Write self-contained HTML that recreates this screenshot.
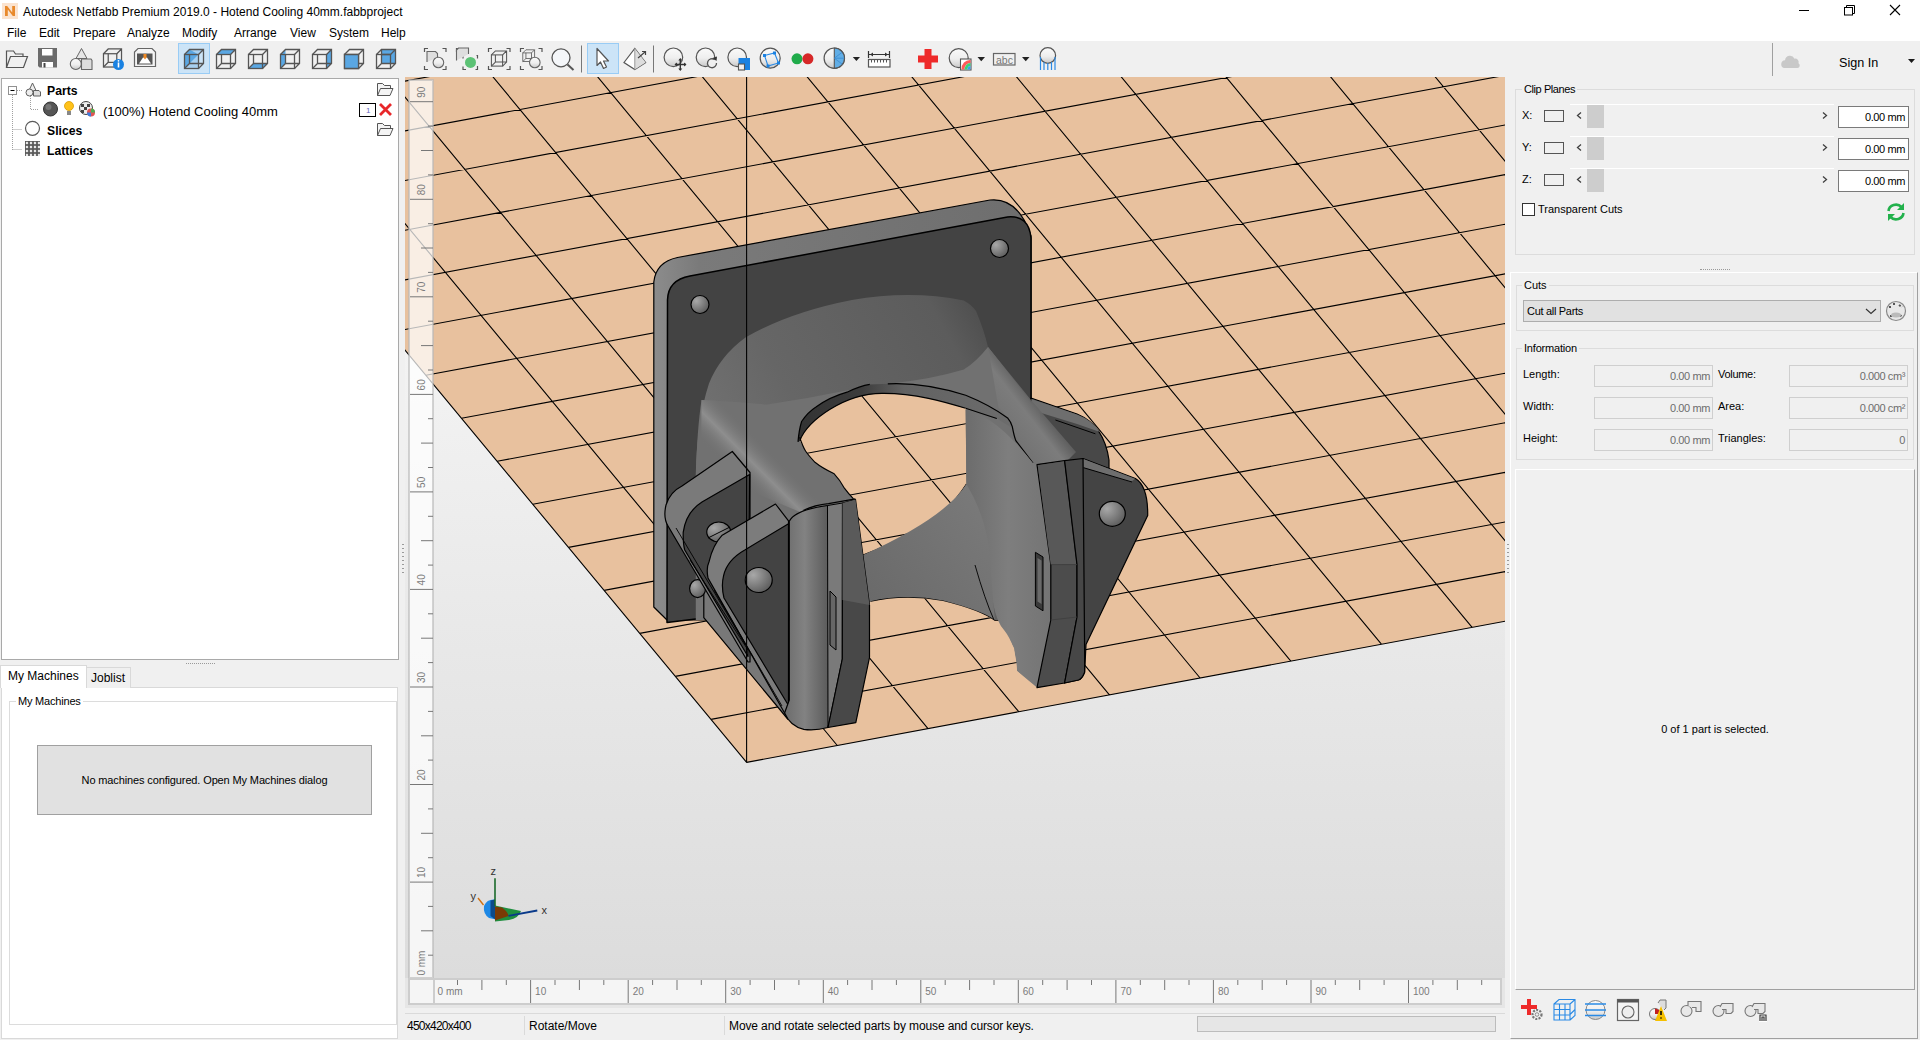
<!DOCTYPE html>
<html><head><meta charset="utf-8">
<style>
*{margin:0;padding:0;box-sizing:border-box}
html,body{width:1920px;height:1040px;overflow:hidden;background:#f0f0f0;font-family:"Liberation Sans",sans-serif;color:#000}
.a{position:absolute}
.t{position:absolute;white-space:nowrap;line-height:1}
#title{left:0;top:0;width:1920px;height:22px;background:#fff}
#menu{left:0;top:22px;width:1920px;height:19px;background:#fff}
#tb{left:0;top:41px;width:1920px;height:36px;background:#f0f0f0}
.gb{position:absolute;border:1px solid #dcdcdc}
.gl{position:absolute;background:#f0f0f0;padding:0 2px;font-size:11px;line-height:1;white-space:nowrap}
.fld{position:absolute;background:#fff;border:1px solid #7a7a7a;font-size:11px;letter-spacing:-0.4px;text-align:right;padding-right:3px;line-height:20px}
.ifld{position:absolute;background:#f0f0f0;border:1px solid #cfcfcf;font-size:11px;letter-spacing:-0.4px;color:#6d6d6d;text-align:right;padding-right:2px;line-height:20px}
.lbl{position:absolute;font-size:11px;white-space:nowrap;line-height:1}
</style></head><body>
<svg class="a" style="left:405px;top:77px" width="1100" height="931" viewBox="405 77 1100 931">
<defs>
<linearGradient id="bg" x1="0" y1="0" x2="0" y2="1"><stop offset="0" stop-color="#fdfdfd"/><stop offset="1" stop-color="#dcdcdc"/></linearGradient>
<clipPath id="cv"><rect x="405" y="77" width="1100" height="901"/></clipPath>
</defs>
<rect x="405" y="77" width="1100" height="931" fill="#e6e6e6"/>
<g clip-path="url(#cv)">
<rect x="405" y="77" width="1100" height="901" fill="url(#bg)"/>
<g id="bedgrid"><polygon fill="#e8c19e" points="746.6,762.4 4823.0,3.8 3334.4,-1804.5 -752.4,-1046.9"/>
<path d="M746.6 762.4L-752.4 -1046.9M837.3 745.5L-661.4 -1063.8M928.0 728.6L-570.5 -1080.6M1018.7 711.7L-479.6 -1097.5M1109.4 694.9L-388.7 -1114.4M1200.1 678.0L-297.7 -1131.2M1290.8 661.1L-206.8 -1148.1M1381.4 644.2L-115.9 -1164.9M1472.1 627.4L-25.0 -1181.8M1562.8 610.5L65.9 -1198.6M1653.4 593.6L156.8 -1215.5M1744.1 576.7L247.7 -1232.3M1834.7 559.9L338.6 -1249.2M1925.4 543.0L429.4 -1266.0M2016.0 526.1L520.3 -1282.8M2106.7 509.3L611.2 -1299.7M2197.3 492.4L702.0 -1316.5M2287.9 475.6L792.9 -1333.4M2378.5 458.7L883.7 -1350.2M2469.1 441.8L974.6 -1367.0M2559.7 425.0L1065.4 -1383.9M2650.3 408.1L1156.2 -1400.7M2740.9 391.3L1247.1 -1417.6M2831.5 374.4L1337.9 -1434.4M2922.1 357.5L1428.7 -1451.2M3012.7 340.7L1519.5 -1468.1M3103.2 323.8L1610.3 -1484.9M3193.8 307.0L1701.1 -1501.7M3284.4 290.1L1791.9 -1518.5M3374.9 273.3L1882.7 -1535.4M3465.5 256.4L1973.4 -1552.2M3556.0 239.6L2064.2 -1569.0M3646.5 222.7L2155.0 -1585.9M3737.1 205.9L2245.7 -1602.7M3827.6 189.0L2336.5 -1619.5M3918.1 172.2L2427.2 -1636.3M4008.6 155.4L2518.0 -1653.1M4099.1 138.5L2608.7 -1670.0M4189.6 121.7L2699.5 -1686.8M4280.1 104.8L2790.2 -1703.6M4370.6 88.0L2880.9 -1720.4M4461.1 71.2L2971.6 -1737.2M4551.6 54.3L3062.3 -1754.0M4642.1 37.5L3153.0 -1770.9M4732.5 20.7L3243.7 -1787.7M4823.0 3.8L3334.4 -1804.5M746.6 762.4L4823.0 3.8M711.0 719.4L4787.6 -39.1M675.3 676.4L4752.3 -82.1M639.7 633.4L4716.9 -125.1M604.1 590.4L4681.5 -168.1M568.5 547.4L4646.1 -211.1M532.8 504.3L4610.7 -254.1M497.2 461.3L4575.3 -297.1M461.5 418.3L4539.9 -340.1M425.9 375.3L4504.5 -383.1M390.2 332.3L4469.1 -426.1M354.6 289.2L4433.7 -469.1M318.9 246.2L4398.3 -512.1M283.3 203.1L4362.9 -555.1M247.6 160.1L4327.5 -598.1M211.9 117.0L4292.1 -641.2M176.3 74.0L4256.6 -684.2M140.6 30.9L4221.2 -727.2M104.9 -12.1L4185.8 -770.3M69.2 -55.2L4150.4 -813.3M33.5 -98.3L4114.9 -856.4M-2.1 -141.4L4079.5 -899.4M-37.8 -184.4L4044.0 -942.5M-73.5 -227.5L4008.6 -985.5M-109.2 -270.6L3973.1 -1028.6M-144.9 -313.7L3937.7 -1071.7M-180.6 -356.8L3902.2 -1114.7M-216.3 -399.9L3866.8 -1157.8M-252.1 -443.0L3831.3 -1200.9M-287.8 -486.1L3795.8 -1244.0M-323.5 -529.2L3760.4 -1287.1M-359.2 -572.4L3724.9 -1330.2M-394.9 -615.5L3689.4 -1373.3M-430.7 -658.6L3653.9 -1416.4M-466.4 -701.7L3618.4 -1459.5M-502.1 -744.9L3583.0 -1502.6M-537.9 -788.0L3547.5 -1545.7M-573.6 -831.2L3512.0 -1588.8M-609.4 -874.3L3476.5 -1631.9M-645.1 -917.5L3441.0 -1675.1M-680.9 -960.6L3405.5 -1718.2M-716.6 -1003.8L3370.0 -1761.3M-752.4 -1046.9L3334.4 -1804.5" stroke="#000" stroke-width="1.1" fill="none"/></g>
<defs>
<linearGradient id="gPlTop" x1="0" y1="0" x2="1" y2="0"><stop offset="0" stop-color="#8c8c8c"/><stop offset="0.12" stop-color="#7a7a7a"/><stop offset="1" stop-color="#6e6e6e"/></linearGradient>
<linearGradient id="gDuct" gradientUnits="userSpaceOnUse" x1="700" y1="470" x2="990" y2="310"><stop offset="0" stop-color="#747474"/><stop offset="0.35" stop-color="#666"/><stop offset="0.85" stop-color="#5c5c5c"/><stop offset="1" stop-color="#4c4c4c"/></linearGradient>
<linearGradient id="gBand" gradientUnits="userSpaceOnUse" x1="715" y1="455" x2="745" y2="425"><stop offset="0" stop-color="#717171" stop-opacity="0"/><stop offset="0.5" stop-color="#8e8e8e"/><stop offset="1" stop-color="#717171" stop-opacity="0"/></linearGradient>
<linearGradient id="gTubeR" gradientUnits="userSpaceOnUse" x1="1000" y1="430" x2="1045" y2="395"><stop offset="0" stop-color="#717171"/><stop offset="0.55" stop-color="#7c7c7c"/><stop offset="0.8" stop-color="#626262" stop-opacity="0.9"/><stop offset="1" stop-color="#4a4a4a" stop-opacity="0"/></linearGradient>
<linearGradient id="gBlk" x1="0" y1="0" x2="1" y2="0"><stop offset="0" stop-color="#6c6c6c"/><stop offset="0.35" stop-color="#828282"/><stop offset="0.75" stop-color="#5c5c5c"/><stop offset="1" stop-color="#484848"/></linearGradient>
<linearGradient id="gWallR" x1="0" y1="0" x2="1" y2="0"><stop offset="0" stop-color="#6c6c6c"/><stop offset="0.45" stop-color="#7e7e7e"/><stop offset="1" stop-color="#727272"/></linearGradient>
<linearGradient id="gLow" gradientUnits="userSpaceOnUse" x1="870" y1="600" x2="990" y2="500"><stop offset="0" stop-color="#6a6a6a"/><stop offset="1" stop-color="#7a7a7a"/></linearGradient>
<linearGradient id="gIW" gradientUnits="userSpaceOnUse" x1="798" y1="0" x2="1010" y2="0"><stop offset="0" stop-color="#333"/><stop offset="0.3" stop-color="#3c3c3c"/><stop offset="0.5" stop-color="#626262"/><stop offset="1" stop-color="#6c6c6c"/></linearGradient>
<radialGradient id="gHole" cx="0.3" cy="0.3" r="0.8"><stop offset="0" stop-color="#a8a8a8"/><stop offset="1" stop-color="#5a5a5a"/></radialGradient>
<clipPath id="cOp1"><path d="M799.8 440.7C808 420 845 393.5 881.8 393.4C915 393 945 402 965.7 408.3L966.4 484Q945 518 905.3 536Q885 547 863 555L853.5 498.8Q846 490 843.8 487.3Q838 478 834.2 473.8Q822 468 815 462.3Q808 455 805.4 450.8Z"/></clipPath>
<clipPath id="cOp2"><path d="M869.5 602Q905 594 943 601Q980 610 995 621Q1006 632 1014 648L1017 671L1037 689L869.5 689Z"/></clipPath>
</defs>
<g stroke="#000" stroke-width="1.2" stroke-linejoin="round">
<!-- plate silhouette (top + left bands) -->
<path fill="url(#gPlTop)" d="M653.8 282Q656 262 677.5 257.5L990 200Q1018 197 1031 236V620H667L653.8 607Z"/>
<!-- plate front face -->
<path fill="#434343" d="M667.5 300Q668 280 690 276L1007.5 217Q1029 215 1031 238V620L704 618L667 622.5Z" stroke-width="1.5"/>
<ellipse cx="700" cy="304.5" rx="9" ry="9" fill="url(#gHole)"/>
<ellipse cx="999.5" cy="248.5" rx="9" ry="9" fill="url(#gHole)"/>
<!-- duct inner surface seen through fan opening -->
<path fill="url(#gDuct)" stroke="none" d="M695.8 620V473.8Q697 420 709 383.5Q720 356 745.8 337.3Q790 312 852 300Q910 290 963.8 300.4Q972 305 976 311Q984 330 988 347L1040 414V620Z"/>
<!-- right back ear -->
<path fill="#484848" d="M1031 398L1077 414Q1104 425 1109 460V472H1031Z"/>
<path fill="#6e6e6e" stroke="none" d="M1031.5 399L1077 414.5Q1092 420 1100 432L1077 424L1031.5 410Z"/>
<path fill="none" d="M1055.4 420L1095.4 433.8" stroke-width="1"/>
<!-- bridge band (ring top surface + tubes) -->
<path fill="#717171" stroke="none" d="M701.5 400Q728 401 767 404.6Q805 399 843.8 391Q870 386 890 383.5Q929 380 963.8 369.6Q976 362 988 347L1040 414V600H869.5L855 520L790 530L696 520L696 474Q697 430 701.5 400Z"/>
<path fill="url(#gBand)" stroke="none" d="M701.5 400L745 401L830 498L800 512L701 470Z"/>
<path fill="url(#gTubeR)" stroke="none" d="M988 347L1031 400L1076 452L1062 466L1033 463Q1016 441 1012 427Q1005 412 998.5 407.7Z"/>
<!-- inner wall band of opening -->
<path fill="url(#gIW)" stroke="none" d="M798 441.9Q799 430 801.6 421.5Q808 412 816 407Q830 397 847 392.2Q860 386 869.8 384.4L887.8 383.8Q923.7 382 965.7 395.2Q990 405 1007.6 417.9L1012 428L996.8 418.5L965.7 408.3C945 402 915 393 881.8 393.4C845 393.5 808 420 799.8 440.7Z"/>
<path fill="none" d="M798 441.9Q799 430 801.6 421.5Q808 412 816 407Q830 397 847 392.2Q860 386 869.8 384.4M887.8 383.8Q923.7 382 965.7 395.2Q990 405 1007.6 417.9Q1011 422 1012.3 426.7Q1014 436 1015.8 440.6L1033 463M965.7 408.3L996.8 418.5"/>
<!-- top opening -->
<g clip-path="url(#cOp1)"><use href="#bedgrid"/></g>
<path fill="none" stroke-width="1.1" d="M799.8 440.7C808 420 845 393.5 881.8 393.4C915 393 945 402 965.7 408.3M966.4 484Q945 518 905.3 536Q885 547 863 555M799.6 437.3Q803 447 805.4 450.8Q808 455 815 462.3Q822 468 834.2 473.8Q840 480 843.8 487.3Q848 493 853.5 498.8"/>
<!-- right wall face -->
<path fill="url(#gWallR)" stroke="none" d="M965.6 409.4Q996 416 1033 463L1060 470V683L1037 687.5L1017 671Q1016 645 1004 630Q990 615 990 560Q975 520 966.4 484Z"/>
<!-- lower inner duct surface -->
<path fill="url(#gLow)" stroke="none" d="M863 555Q945 518 966.4 484Q988 520 990 560Q993 600 995 621Q980 610 943 601Q905 594 869.5 602Z"/>
<path fill="none" d="M870.7 601.8Q905 594 943 601Q985 612 995 621"/>
<path fill="none" stroke-width="0.9" d="M975 565Q985 600 994 620"/>
<!-- lower opening -->
<g clip-path="url(#cOp2)"><use href="#bedgrid"/></g>
<!-- right ear front flange -->
<path fill="#444" d="M1083 458.5L1135.4 478.5Q1148 486 1147.7 515.4L1086 644.6L1084.6 672.3Q1082 679 1078.5 680L1064.6 683L1070 470Z"/>
<path fill="#6e6e6e" stroke="none" d="M1083.5 459L1135 478.8L1131 482L1083.5 467.5Z"/>
<path fill="none" d="M1083.5 467.7L1132 482" stroke-width="1"/>
<ellipse cx="1112.3" cy="513.8" rx="13" ry="12.5" fill="url(#gHole)"/>
<!-- right block front strips -->
<path fill="#4c4c4c" d="M1037 464.6L1064.6 460.6L1077 564.6V617L1064.6 683L1037 687.7L1050.8 620V564.6Z"/>
<path fill="#585858" stroke="none" d="M1037.7 465.2L1064 461.3L1076.4 564L1050.6 564.2Z"/>
<path fill="#474747" d="M1064.6 460.6L1083 458.5L1084.6 647.7V672.3Q1082 679 1078.5 680L1064.6 683L1077 617V564.6Z"/>
<path fill="none" d="M1050.8 564.6L1077 564.6M1050.8 620L1077 617" stroke="#3e3e3e" stroke-width="0.8"/>
<!-- slot on right wall -->
<path d="M1035.4 552.3L1043 557V610.8L1035.4 606Z" fill="#3a3a3a" stroke-width="1"/><path d="M1037.5 558L1041.5 560.5V604L1037.5 601.5Z" fill="#6a6a6a" stroke="none"/>
<!-- left clamp back flange -->
<path fill="#787878" d="M703.8 585V617.7L787.7 719L789.4 700L730 580Z"/>
<ellipse cx="697.6" cy="588.6" rx="8" ry="9" fill="url(#gHole)"/>
<path fill="#7a7a7a" d="M732.3 451.5L750 472.5V662H748L668 526Q663 518 666 505Q670 492 682 486Z"/>
<path fill="#444" d="M749.6 474.6L702 502Q686 512 683.2 532.4Q683 543 684.6 549.7L748 656.5Z"/>
<path fill="none" stroke-width="0.9" d="M676 528L745 644M690 560L748 650"/>
<ellipse cx="718.75" cy="532" rx="12" ry="10" fill="url(#gHole)"/>
<path fill="none" d="M708 538L730 527" stroke-width="1"/>
<!-- left clamp front flange -->
<path fill="#7c7c7c" d="M775.5 504L788.5 520.8L789.4 713L784.6 713L708 578Q706 568 709.2 561.2Q713 545 722.2 535.2Z"/>
<path fill="#434343" d="M788.5 523.7L745.2 549.7Q727 560 723.6 575.6Q721 586 724 598L788.5 705.5Z"/>
<path fill="none" d="M714 590L782 706" stroke-width="0.9"/>
<ellipse cx="758.75" cy="580" rx="13.5" ry="12.5" fill="url(#gHole)"/>
<!-- left block -->
<path fill="url(#gBlk)" d="M789.25 521.25Q795 510 827.5 505.5L830 505.5L842 659L828 727.5Q815 731 803.8 729.4Q790 726 784.6 713L789.25 700Z"/>
<path fill="#7a7a7a" stroke-width="1" d="M827.5 505.5L842.5 503L842.3 659L828 727.5Z"/>
<path fill="#484848" d="M842.5 503L855.5 499.5L869.5 605V657.5L855.8 722.7L828 727.5L842.3 659Z"/>
<path fill="#5a5a5a" stroke="none" d="M842.5 503L855.5 499.5L869.5 605L842.5 600Z"/>
<path fill="#666" stroke-width="1" d="M830 591L836 597V650L830 645Z"/>
<!-- duct top connecting to left block -->

<path fill="none" d="M803.5 510.4Q815 505 828.5 503.7L855.4 498.8"/>
</g>

<path d="M746.6 77V762.4" stroke="#000" stroke-width="1.1"/>
</g>
<rect x="409" y="80" width="24" height="898" fill="#fff" fill-opacity="0.72" stroke="#b8b8b8" stroke-opacity="0.6" stroke-width="2"/>
<path d="M410 979.6H433M428 955.2H433M421 930.8H433M428 906.4H433M410 882.1H433M428 857.7H433M421 833.3H433M428 808.9H433M410 784.5H433M428 760.1H433M421 735.8H433M428 711.4H433M410 687.0H433M428 662.6H433M421 638.2H433M428 613.8H433M410 589.4H433M428 565.1H433M421 540.7H433M428 516.3H433M410 491.9H433M428 467.5H433M421 443.1H433M428 418.7H433M410 394.4H433M428 370.0H433M421 345.6H433M428 321.2H433M410 296.8H433M428 272.4H433M421 248.0H433M428 223.7H433M410 199.3H433M428 174.9H433M421 150.5H433M428 126.1H433M410 101.7H433" stroke="#777" stroke-width="1"/>
<text transform="translate(424.5 975.6) rotate(-90)" font-size="10" fill="#7b7b7b">0 mm</text>
<text transform="translate(424.5 878.1) rotate(-90)" font-size="10" fill="#7b7b7b">10</text>
<text transform="translate(424.5 780.5) rotate(-90)" font-size="10" fill="#7b7b7b">20</text>
<text transform="translate(424.5 683.0) rotate(-90)" font-size="10" fill="#7b7b7b">30</text>
<text transform="translate(424.5 585.4) rotate(-90)" font-size="10" fill="#7b7b7b">40</text>
<text transform="translate(424.5 487.9) rotate(-90)" font-size="10" fill="#7b7b7b">50</text>
<text transform="translate(424.5 390.4) rotate(-90)" font-size="10" fill="#7b7b7b">60</text>
<text transform="translate(424.5 292.8) rotate(-90)" font-size="10" fill="#7b7b7b">70</text>
<text transform="translate(424.5 195.3) rotate(-90)" font-size="10" fill="#7b7b7b">80</text>
<text transform="translate(424.5 97.7) rotate(-90)" font-size="10" fill="#7b7b7b">90</text>
<rect x="409" y="979" width="1092" height="25" fill="#f5f5f5" stroke="#cdcdcd" stroke-width="2"/>
<path d="M434 979V1004" stroke="#cdcdcd" stroke-width="2"/>
<path d="M457.5 980v5M481.9 980v10M506.3 980v5M530.6 980V1003M555.0 980v5M579.4 980v10M603.8 980v5M628.2 980V1003M652.6 980v5M677.0 980v10M701.3 980v5M725.7 980V1003M750.1 980v5M774.5 980v10M798.9 980v5M823.3 980V1003M847.6 980v5M872.0 980v10M896.4 980v5M920.8 980V1003M945.2 980v5M969.6 980v10M994.0 980v5M1018.3 980V1003M1042.7 980v5M1067.1 980v10M1091.5 980v5M1115.9 980V1003M1140.3 980v5M1164.7 980v10M1189.0 980v5M1213.4 980V1003M1237.8 980v5M1262.2 980v10M1286.6 980v5M1311.0 980V1003M1335.3 980v5M1359.7 980v10M1384.1 980v5M1408.5 980V1003M1432.9 980v5M1457.3 980v10M1481.7 980v5" stroke="#777" stroke-width="1"/>
<text x="437.6" y="995" font-size="10" fill="#7b7b7b">0 mm</text>
<text x="535.1" y="995" font-size="10" fill="#7b7b7b">10</text>
<text x="632.7" y="995" font-size="10" fill="#7b7b7b">20</text>
<text x="730.2" y="995" font-size="10" fill="#7b7b7b">30</text>
<text x="827.8" y="995" font-size="10" fill="#7b7b7b">40</text>
<text x="925.3" y="995" font-size="10" fill="#7b7b7b">50</text>
<text x="1022.8" y="995" font-size="10" fill="#7b7b7b">60</text>
<text x="1120.4" y="995" font-size="10" fill="#7b7b7b">70</text>
<text x="1217.9" y="995" font-size="10" fill="#7b7b7b">80</text>
<text x="1315.5" y="995" font-size="10" fill="#7b7b7b">90</text>
<text x="1413.0" y="995" font-size="10" fill="#7b7b7b">100</text>
<g>
<path d="M495 905.5L521 911Q519 918 509 920L495 921.5Z" fill="#1f8f3f"/>
<path d="M495 906.5L502 907.5Q508 912 508.5 916L495 920.4Z" fill="#7a3a05"/>
<path d="M495 899.6Q487 899 484 906Q483 914 489 918L495 919.2Z" fill="#1e88e5"/>
<path d="M490.5 900.5L495 899.6V919.2L490.5 916Z" fill="#0d4a8a"/>
<path d="M495 878.2V906" stroke="#1a6a2a" stroke-width="1.6"/>
<path d="M478 898l5.5 7" stroke="#d07010" stroke-width="1.4"/>
<path d="M508.5 915.8L537.3 910.5" stroke="#0a3a8a" stroke-width="1.8"/>
<text x="490.5" y="875" font-size="11" fill="#333" font-family="Liberation Sans">z</text>
<text x="470.5" y="900" font-size="11" fill="#333" font-family="Liberation Sans">y</text>
<text x="541.5" y="913.5" font-size="11" fill="#333" font-family="Liberation Sans">x</text>
</g>

</svg><div id="title" class="a">
 <svg class="a" style="left:2px;top:3px" width="16" height="16" viewBox="0 0 16 16"><rect width="16" height="16" fill="#fbe3cf"/><path d="M3 13V3h2.2l5 6.5V3H13v10h-2.2l-5-6.5V13z" fill="#e8892b"/></svg>
 <div class="t" id="ttl" style="left:23px;top:6px;font-size:12px">Autodesk Netfabb Premium 2019.0 - Hotend Cooling 40mm.fabbproject</div>
 <svg class="a" style="left:1790px;top:0" width="130" height="22"><path d="M9 10.5h10" stroke="#000" stroke-width="1"/><rect x="54.5" y="7.5" width="8" height="7.5" fill="none" stroke="#000"/><path d="M56.5 7.5V5.5h8v8h-2" fill="none" stroke="#000"/><path d="M100 5l10 10M110 5l-10 10" stroke="#000" stroke-width="1.1"/></svg>
</div>
<div id="menu" class="a">
 <div class="t" style="left:7px;top:5px;font-size:12px">File</div>
 <div class="t" style="left:39px;top:5px;font-size:12px">Edit</div>
 <div class="t" style="left:73px;top:5px;font-size:12px">Prepare</div>
 <div class="t" style="left:127px;top:5px;font-size:12px">Analyze</div>
 <div class="t" style="left:182px;top:5px;font-size:12px">Modify</div>
 <div class="t" style="left:234px;top:5px;font-size:12px">Arrange</div>
 <div class="t" style="left:290px;top:5px;font-size:12px">View</div>
 <div class="t" style="left:329px;top:5px;font-size:12px">System</div>
 <div class="t" style="left:381px;top:5px;font-size:12px">Help</div>
</div>
<div id="tb" class="a"></div>
<!-- left tree panel -->
<div class="a" style="left:1px;top:78px;width:398px;height:582px;background:#fff;border:1px solid #a9a9a9"></div>
<div class="a" style="left:186px;top:663px;width:29px;height:1px;border-top:1px dotted #9a9a9a"></div>
<!-- tabs -->
<div class="a" style="left:1px;top:687px;width:397px;height:352px;background:#fff;border:1px solid #d9d9d9"></div>
<div class="a" style="left:86px;top:667px;width:45px;height:21px;background:#f0f0f0;border:1px solid #d9d9d9;border-bottom:none"></div>
<div class="a" style="left:0px;top:665px;width:87px;height:23px;background:#fff;border:1px solid #d9d9d9;border-bottom:none"></div>
<div class="t" style="left:8px;top:670px;font-size:12px">My Machines</div>
<div class="t" style="left:91px;top:672px;font-size:12px">Joblist</div>
<div class="a" style="left:9px;top:701px;width:388px;height:324px;border:1px solid #dcdcdc"></div>
<div class="t" style="left:16px;top:696px;font-size:11px;background:#fff;padding:0 2px;letter-spacing:-0.2px">My Machines</div>
<div class="a" style="left:37px;top:745px;width:335px;height:70px;background:#e1e1e1;border:1px solid #a0a0a0"></div>
<div class="t" style="left:37px;top:775px;width:335px;text-align:center;font-size:11px;letter-spacing:-0.13px">No machines configured. Open My Machines dialog</div>
<!-- status bar -->
<div class="a" style="left:405px;top:1013px;width:1100px;height:1px;background:#dadada"></div>
<div class="t" style="left:407px;top:1020px;font-size:12px;letter-spacing:-0.76px">450x420x400</div>
<div class="a" style="left:524px;top:1016px;width:1px;height:19px;background:#dadada"></div>
<div class="t" style="left:529px;top:1020px;font-size:12px">Rotate/Move</div>
<div class="a" style="left:724px;top:1016px;width:1px;height:19px;background:#dadada"></div>
<div class="t" style="left:729px;top:1020px;font-size:12px;letter-spacing:-0.12px">Move and rotate selected parts by mouse and cursor keys.</div>
<div class="a" style="left:1197px;top:1016px;width:299px;height:16px;background:#e6e6e6;border:1px solid #bcbcbc"></div>
<!-- right panel -->
<div class="a" style="left:1772px;top:43px;width:1px;height:33px;background:#a0a0a0"></div>
<div class="t" style="left:1839px;top:57px;font-size:12.6px">Sign In</div>
<svg class="a" style="left:1780px;top:52px" width="140" height="20"><path d="M4 16a4 4 0 0 1 1-7.8a5 5 0 0 1 9.5-1.5a3.5 3.5 0 0 1 4 4.5a2.6 2.6 0 0 1-1 4.8z" fill="#c8c8c8"/><path d="M128 7h7l-3.5 4z" fill="#1a1a1a"/></svg>
<div class="gb" style="left:1515px;top:89px;width:400px;height:166px"></div>
<div class="gl" style="left:1522px;top:84px;letter-spacing:-0.42px">Clip Planes</div>
<div class="gb" style="left:1510px;top:272px;width:408px;height:767px;border-color:#fff #a0a0a0 #a0a0a0 #fff"></div>
<div class="gb" style="left:1516px;top:285px;width:398px;height:46px"></div>
<div class="gl" style="left:1522px;top:280px">Cuts</div>
<div class="gb" style="left:1516px;top:348px;width:398px;height:112px"></div>
<div class="gl" style="left:1522px;top:343px;letter-spacing:-0.2px">Information</div>
<div class="gb" style="left:1515px;top:469px;width:400px;height:521px;border-color:#fff #a0a0a0 #a0a0a0 #fff"></div>
<div class="t" style="left:1515px;top:724px;width:400px;text-align:center;font-size:11px">0 of 1 part is selected.</div>
<div class="a" style="left:402px;top:544px;width:2px;height:29px;background:repeating-linear-gradient(to bottom,#9a9a9a 0 1.5px,transparent 1.5px 4px)"></div>
<div class="a" style="left:1507px;top:544px;width:2px;height:29px;background:repeating-linear-gradient(to bottom,#9a9a9a 0 1.5px,transparent 1.5px 4px)"></div>
<!-- clip rows -->
<div class="lbl" style="left:1522px;top:110px">X:</div>
<div class="lbl" style="left:1522px;top:142px">Y:</div>
<div class="lbl" style="left:1522px;top:174px">Z:</div>
<svg class="a" style="left:1540px;top:100px" width="375" height="95">
 <g id="cr">
 <rect x="4.5" y="10.5" width="19" height="11" fill="none" stroke="#555"/>
 <path d="M41 12.5l-3.5 3l3.5 3" fill="none" stroke="#404040" stroke-width="1.3"/>
 <rect x="47" y="5" width="17" height="23" fill="#cdcdcd"/>
 <path d="M30 4.5h264" stroke="#fff"/>
 <path d="M283 12.5l3.5 3l-3.5 3" fill="none" stroke="#404040" stroke-width="1.3"/>
 </g>
 <use href="#cr" y="32"/><use href="#cr" y="64"/>
</svg>
<div class="fld" style="left:1838px;top:106px;width:71px;height:22px">0.00 mm</div>
<div class="fld" style="left:1838px;top:138px;width:71px;height:22px">0.00 mm</div>
<div class="fld" style="left:1838px;top:170px;width:71px;height:22px">0.00 mm</div>
<div class="a" style="left:1522px;top:203px;width:13px;height:13px;background:#fff;border:1px solid #333"></div>
<div class="lbl" style="left:1538px;top:204px">Transparent Cuts</div>
<svg class="a" style="left:1885px;top:202px" width="22" height="20" viewBox="0 0 22 20"><path d="M3.5 9a7.5 7 0 0 1 13-4" fill="none" stroke="#22b14c" stroke-width="2.6"/><path d="M19 1v7h-7z" fill="#22b14c"/><path d="M18.5 11a7.5 7 0 0 1-13 4" fill="none" stroke="#22b14c" stroke-width="2.6"/><path d="M3 19v-7h7z" fill="#22b14c"/></svg>
<div class="a" style="left:1700px;top:269px;width:30px;height:1px;border-top:1px dotted #9a9a9a"></div>
<!-- cuts -->
<div class="a" style="left:1523px;top:300px;width:358px;height:22px;background:#e1e1e1;border:1px solid #adadad"></div>
<div class="lbl" style="left:1527px;top:306px;letter-spacing:-0.3px">Cut all Parts</div>
<svg class="a" style="left:1864px;top:306px" width="14" height="10"><path d="M2 3l5 4.5l5-4.5" fill="none" stroke="#333" stroke-width="1.1"/></svg>
<svg class="a" style="left:1885px;top:300px" width="22" height="22" viewBox="0 0 22 22"><circle cx="11" cy="11" r="9.5" fill="#e8e8e8" stroke="#8a8a8a" stroke-width="1.2"/><path d="M4 7h3M8 4h3M14 5l3 2M5 16h3M15 15l2 2" stroke="#555" stroke-width="2" stroke-dasharray="2 1.5"/><ellipse cx="11" cy="15" rx="5" ry="2.5" fill="#bbb"/></svg>
<!-- info -->
<div class="lbl" style="left:1523px;top:369px">Length:</div>
<div class="lbl" style="left:1523px;top:401px">Width:</div>
<div class="lbl" style="left:1523px;top:433px">Height:</div>
<div class="lbl" style="left:1718px;top:369px;letter-spacing:-0.3px">Volume:</div>
<div class="lbl" style="left:1718px;top:401px">Area:</div>
<div class="lbl" style="left:1718px;top:433px">Triangles:</div>
<div class="ifld" style="left:1594px;top:365px;width:119px;height:22px">0.00 mm</div>
<div class="ifld" style="left:1594px;top:397px;width:119px;height:22px">0.00 mm</div>
<div class="ifld" style="left:1594px;top:429px;width:119px;height:22px">0.00 mm</div>
<div class="ifld" style="left:1789px;top:365px;width:119px;height:22px">0.000 cm³</div>
<div class="ifld" style="left:1789px;top:397px;width:119px;height:22px">0.000 cm²</div>
<div class="ifld" style="left:1789px;top:429px;width:119px;height:22px">0</div>
<svg class="a" style="left:1515px;top:995px" width="260" height="30" viewBox="1515 995 260 30">
 <path d="M1527 999h4v6h6v4h-6v6h-4v-6h-6v-4h6z" fill="#ee2a2a"/>
 <circle cx="1537" cy="1014.5" r="4.5" fill="#f0f0f0" stroke="#777" stroke-width="2.2" stroke-dasharray="2 1.3"/><circle cx="1537" cy="1014.5" r="1.8" fill="#f0f0f0" stroke="#777" stroke-width="0.8"/>
 <g fill="none" stroke="#2a8ae5" stroke-width="1.1"><path d="M1554 1004h16v16h-16zM1554 1004l5-4.5h16v16l-5 4.5M1570 1004l5-4.5M1559.5 1004v16M1565 1004v16M1554 1009.5h16M1554 1015h16M1575 1009.5l-5 5"/></g>
 <circle cx="1595.5" cy="1010" r="9.5" fill="url(#sph)" stroke="#888" stroke-width="1"/>
 <path d="M1585 1004h21M1585 1010h21M1585 1015.5h21" stroke="#2a8ae5" stroke-width="1.3"/>
 <rect x="1617.5" y="999.5" width="21" height="21" fill="#f4f4f4" stroke="#666" stroke-width="1.2"/><rect x="1617.5" y="999.5" width="21" height="3" fill="#555"/><circle cx="1628" cy="1012" r="6" fill="#eee" stroke="#666" stroke-width="1.1"/>
 <circle cx="1655" cy="1014" r="5.5" fill="url(#sph)" stroke="#777"/><path d="M1655 1008.5a5.5 5.5 0 0 1 5.5 5.5h-5.5z" fill="#c02020"/><path d="M1658 1003l2-3h6v8l-2 2" fill="#ddd" stroke="#777"/>
 <path d="M1661 1006l6 15h-12z" fill="#f5c000"/><path d="M1661 1011v4" stroke="#000" stroke-width="1.5"/><circle cx="1661" cy="1018" r="0.8"/>
 <g fill="#e8e8e8" stroke="#777" stroke-width="1.1">
  <circle cx="1686.5" cy="1011" r="5.5"/><path d="M1688 1006v-4.5h13v10h-5v-4h-4"/>
  <circle cx="1718.5" cy="1011" r="5.5"/><path d="M1720 1007l2-3.5h11v8l-2 2h-5v-4h-4"/>
  <circle cx="1750.5" cy="1011" r="5.5"/><path d="M1752 1007l2-3.5h11v8l-2 2h-5v-4h-4"/>
 </g>
 <rect x="1759" y="1014" width="8" height="8" fill="#fff"/><path d="M1760 1021v-6h6v6M1762 1021v-4h2v4" fill="none" stroke="#333" stroke-width="1.2"/>
</svg>
<svg class="a" style="left:0;top:78px" width="400" height="90" viewBox="0 78 400 90">
 <!-- tree lines -->
 <path d="M12.5 95v55M17 90.5h6M30.5 96v13.5h8M12.5 129.5h9M12.5 149.5h9" stroke="#a0a0a0" stroke-dasharray="1 1" fill="none"/>
 <rect x="8.5" y="86.5" width="8" height="8" fill="#fff" stroke="#919191"/>
 <path d="M10.5 90.5h4" stroke="#000"/>
 <!-- parts icon -->
 <g fill="#eee" stroke="#606060" stroke-width="1">
  <path d="M29 90.5l3.5-7.5l3.5 7.5"/>
  <circle cx="29.5" cy="92.5" r="3.5"/>
  <path d="M33.5 90.5h5.5l1.5 1.5v4h-7z" fill="#ddd"/>
 </g>
 <circle cx="50.5" cy="109" r="7" fill="#555" stroke="#333"/>
 <circle cx="48.5" cy="107" r="3" fill="#777"/>
 <!-- bulb -->
 <circle cx="69" cy="106" r="4.5" fill="#ffc21a" stroke="#d89a00" stroke-width="0.8"/>
 <rect x="67" y="111" width="4" height="4" fill="#888"/>
 <!-- checker sphere -->
 <circle cx="86" cy="108" r="6.5" fill="#eee" stroke="#444"/>
 <path d="M81 104h3v3h-3zM87 104h3v3h-3zM84 107h3v3h-3zM81 110h3v3h-3z" fill="#444"/>
 <circle cx="91" cy="112.5" r="4" fill="#e05555"/>
 <path d="M91 108.5a4 4 0 0 1 4 4h-4z" fill="#4caf50"/><path d="M87 112.5a4 4 0 0 0 4 4v-4z" fill="#3a7ee0"/>
 <!-- id box and red X -->
 <rect x="359.5" y="103.5" width="16" height="13" fill="#fff" stroke="#000"/>
 <text x="366" y="113" font-size="8" fill="#6a6ac0">1</text>
 <path d="M380 104l11 11M391 104l-11 11" stroke="#e8272a" stroke-width="2.8"/>
 <!-- folders -->
 <g fill="#f4f4f4" stroke="#555">
  <path d="M377.5 95.5v-12h5l2 2h6v3M377.5 95.5l3-7h12.5l-3 7z"/>
  <path d="M377.5 135.5v-12h5l2 2h6v3M377.5 135.5l3-7h12.5l-3 7z"/>
 </g>
 <!-- slices circle -->
 <circle cx="32.5" cy="128.3" r="7" fill="#fff" stroke="#5a5a5a" stroke-width="1.2"/>
 <!-- lattice checker -->
 <defs><pattern id="chk" width="4" height="4" patternUnits="userSpaceOnUse" x="25" y="141"><rect width="4" height="4" fill="#5a5a5a"/><rect x="1" y="1" width="2" height="2" fill="#fff" transform="rotate(45 2 2)"/></pattern></defs>
 <rect x="25" y="141" width="15" height="15" fill="url(#chk)"/>
</svg>
<div class="t" style="left:47px;top:85px;font-size:12.2px;font-weight:bold">Parts</div>
<div class="t" style="left:103px;top:105px;font-size:13px">(100%) Hotend Cooling 40mm</div>
<div class="t" style="left:47px;top:125px;font-size:12.2px;font-weight:bold">Slices</div>
<div class="t" style="left:47px;top:145px;font-size:12.2px;font-weight:bold">Lattices</div>
<svg class="a" style="left:0;top:41px" width="1100" height="36" viewBox="0 41 1100 36">
<defs>
 <linearGradient id="sph" x1="0" y1="0" x2="0" y2="1"><stop offset="0" stop-color="#fafafa"/><stop offset="0.55" stop-color="#eee"/><stop offset="1" stop-color="#c9c9c9"/></linearGradient>
 <g id="cube" fill="none" stroke="#555" stroke-width="1.3">
  <rect x="0.5" y="5.5" width="14" height="14"/><path d="M0.5 5.5l5-5h14v14l-5 5M14.5 5.5l5-5M5.5 5.5v9h9M14.5 14.5h5M0.5 19.5l5-5" /></g>
</defs>
<!-- open -->
<path d="M6.5 67.5V51h7l2 3h7.5v2.5M6.5 67.5l4-11h17l-4 11z" fill="none" stroke="#555" stroke-width="1.2"/>
<!-- save -->
<path d="M38 48h19v19.5H39.5L38 66z" fill="#6b6b6b"/>
<rect x="42" y="49" width="10.5" height="6.5" fill="#fff"/><rect x="42" y="62" width="11" height="5.5" fill="#fff"/><rect x="43.5" y="63" width="2" height="4.5" fill="#444"/>
<!-- shapes -->
<path d="M81.5 48.5l-5.5 10h11z" fill="#e6e6e6" stroke="#666" stroke-width="1"/>
<circle cx="75.8" cy="64" r="5.5" fill="url(#sph)" stroke="#666" stroke-width="1.1"/>
<path d="M81.5 59h9.5l1 1.5V69.5h-10.5z" fill="#ddd" stroke="#666" stroke-width="1.1"/>
<!-- box info -->
<g transform="translate(103 48.5)"><use href="#cube" transform="scale(0.95)"/></g>
<circle cx="118.5" cy="64.5" r="5.5" fill="#1a82e2"/><path d="M118.5 62.5v5" stroke="#fff" stroke-width="1.6"/><circle cx="118.5" cy="60.8" r="0.9" fill="#fff"/>
<!-- printer -->
<path d="M134.5 66.5V52l3.5-3.5h14l3.5 3.5v14.5z" fill="#f4f4f4" stroke="#666" stroke-width="1.2"/>
<rect x="137" y="53.5" width="15.5" height="11" fill="#555"/><path d="M139 63.5l4-6h4l4 6z" fill="#fff"/><path d="M143.5 54h3v3.5l-1.5 2l-1.5-2z" fill="#f08a24"/>
<!-- selected iso -->
<rect x="178.5" y="43.5" width="31" height="30" fill="#cce4f7" stroke="#99ccf5"/>
<g transform="translate(184 49)">
 <path d="M0.5 5.5h14v14H0.5z" fill="#a8d0f0"/><path d="M0.5 5.5h14L0.5 19.5z" fill="#5aa7e3"/><path d="M0.5 5.5l5-5h14l-5 5z" fill="#5aa7e3"/><path d="M5.5 0.5h14l-5 5z" fill="#a8d0f0"/>
 <use href="#cube"/></g>
<!-- top -->
<g transform="translate(216 49)"><path d="M0.5 5.5l5-5h14l-5 5z" fill="#5aa7e3"/><use href="#cube"/></g>
<!-- bottom -->
<g transform="translate(248 49)"><path d="M0.5 19.5l5-5h14l-5 5z" fill="#5aa7e3"/><use href="#cube"/></g>
<!-- left -->
<g transform="translate(280 49)"><path d="M0.5 5.5l5-5v14l-5 5z" fill="#5aa7e3"/><use href="#cube"/></g>
<!-- right -->
<g transform="translate(312 49)"><path d="M14.5 5.5l5-5v14l-5 5z" fill="#5aa7e3"/><use href="#cube"/></g>
<!-- front -->
<g transform="translate(344 49)"><use href="#cube"/><path d="M0.5 5.5h14v14H0.5z" fill="#5aa7e3" stroke="#555" stroke-width="1.3"/></g>
<!-- back -->
<g transform="translate(376 49)"><path d="M5.5 0.5h14v14h-14z" fill="#5aa7e3"/><use href="#cube"/><path d="M5.5 0.5v5M5.5 5.5h9" stroke="#555" stroke-width="1.3" fill="none"/></g>
<!-- zoom all -->
<g fill="none" stroke="#555" stroke-width="1.2">
 <path d="M424.5 52v-3.5h3.5M442.5 48.5h3.5V52M446 66v3.5h-3.5M428 69.5h-3.5V66"/>
 <path d="M456.5 52v-3.5h3.5M464.5 55.5h-1.5v3M476.5 55.5h1v3M477.5 66v3.5h-2M466 69.5h-3v-3"/>
 <path d="M488.5 52v-3.5h3.5M506.5 48.5h3.5V52M510 66v3.5h-3.5M492 69.5h-3.5V66"/>
 <path d="M520.5 52v-3.5h3.5M538.5 48.5h3.5V52M542 66v3.5h-3.5M524 69.5h-3.5V66"/>
</g>
<path d="M427 62V51.5h8.5l2 2v4" fill="#dedede" stroke="#666" stroke-width="1.1"/>
<circle cx="438.4" cy="62.5" r="5.3" fill="url(#sph)" stroke="#666" stroke-width="1.1"/>
<path d="M456.5 60.5V50l2-2h10v6" fill="#dedede" stroke="#666" stroke-width="1.1"/>
<circle cx="470.5" cy="62.4" r="5.5" fill="#5cc275"/>
<g transform="translate(491 50.5) scale(0.8)"><use href="#cube"/></g>
<g transform="translate(522.5 49.5) scale(0.62)"><use href="#cube"/></g>
<circle cx="534.8" cy="62.5" r="5.3" fill="url(#sph)" stroke="#666" stroke-width="1.1"/>
<!-- magnifier -->
<circle cx="561" cy="57.8" r="9" fill="#f4f6f9" stroke="#555" stroke-width="1.3"/><path d="M567.5 64.5l6 5.5" stroke="#555" stroke-width="2"/>
<path d="M581.5 45.5v27" stroke="#777"/>
<rect x="587.5" y="43.5" width="31" height="30" fill="#cce4f7" stroke="#99ccf5"/>
<path d="M597 48.5V65.5l3.5-3.5l3 6.5l3-1.5l-3-6h5z" fill="#fff" stroke="#555" stroke-width="1.2" stroke-linejoin="round"/>
<path d="M624 62.5l10.8-14l10.8 14l-10.8 7z" fill="#fff" stroke="#555" stroke-width="1.2"/><path d="M634.8 48.5l10.8 14l-10.8 7z" fill="#ddd"/><path d="M634.8 48.5V69.5" stroke="#999"/>
<path d="M638 58l7-6M642 51.5h3.5v3.5" stroke="#444" stroke-width="1.2" fill="none"/>
<path d="M653.5 45.5v27" stroke="#777"/>
<!-- move/rotate -->
<circle cx="673.4" cy="57.3" r="9.3" fill="url(#sph)" stroke="#555" stroke-width="1.2"/>
<path d="M680.3 59v11M675 64.5h11" stroke="#333" stroke-width="1.4"/><path d="M678.3 60.5l2-2.5l2 2.5zM678.3 68.5l2 2.5l2-2.5zM677 62.5l-2.5 2l2.5 2zM684 62.5l2.5 2l-2.5 2z" fill="#333"/>
<circle cx="705.5" cy="57.3" r="9.3" fill="url(#sph)" stroke="#555" stroke-width="1.2"/>
<path d="M716.5 63a4.5 4.5 0 1 1-2-3.5" fill="#f0f0f0" stroke="#555" stroke-width="1.3"/><path d="M712.5 58l4.5-1.5l-0.5 4.5z" fill="#333"/>
<circle cx="737.2" cy="57.3" r="9.3" fill="url(#sph)" stroke="#555" stroke-width="1.2"/>
<rect x="738.5" y="58" width="11.5" height="12" fill="#1a82e2"/><rect x="738.5" y="64" width="6" height="6" fill="#f0f0f0" stroke="#555" stroke-width="1.1"/>
<circle cx="770.2" cy="58.2" r="10" fill="url(#sph)" stroke="#555" stroke-width="1.2"/>
<path d="M764.5 55.5l10-2.5l4 10l-10.5 3z" fill="none" stroke="#2a8ae5" stroke-width="1.1"/><path d="M763 54h3v3h-3zM773 51.5h3v3h-3zM777 61.5h3v3h-3zM766.5 64.5h3v3h-3z" fill="#1a82e2"/>
<circle cx="797" cy="58.8" r="5.5" fill="#1fab4a"/><circle cx="807.9" cy="58.8" r="5.5" fill="#d62828"/>
<circle cx="834.3" cy="58.2" r="10.2" fill="url(#sph)" stroke="#555" stroke-width="1.2"/>
<path d="M834.3 48a10.2 10.2 0 0 1 0 20.4z" fill="#62aee6" stroke="#555" stroke-width="1.1"/><path d="M834.3 58.2l8-6M834.3 58.2l10 0M834.3 58.2l8 6" stroke="#3a8ad0" stroke-width="0.8"/>
<path d="M852.8 57h7.2l-3.6 4z" fill="#222"/>
<!-- ruler -->
<path d="M868.5 51v7M889.5 51v7M869 54.5h20" stroke="#333" stroke-width="1.2"/><path d="M870 54.5l3-2v4zM888 54.5l-3-2v4z" fill="#333"/>
<rect x="868.5" y="59.5" width="21.5" height="7.5" fill="#fff" stroke="#555" stroke-width="1.2"/><path d="M871.5 60v2.5M874.5 60v2.5M877.5 60v2.5M880.5 60v2.5M883.5 60v2.5M886.5 60v2.5" stroke="#555"/>
<!-- red cross -->
<path d="M924.5 49h7v6.5h6.5v7h-6.5V69h-7v-6.5H918v-7h6.5z" fill="#ee2a2a"/>
<circle cx="958.7" cy="58.1" r="9.5" fill="url(#sph)" stroke="#555" stroke-width="1.2"/>
<rect x="960.5" y="59" width="10.5" height="11" fill="#fff" stroke="#555" stroke-width="1.1"/>
<path d="M961.5 69.5a8.5 9 0 0 1 9-9.5v3a6 6 0 0 0-6 6.5z" fill="#ff5a5a"/><path d="M964.5 69.5a6 6.5 0 0 1 6-6.5v3a3 3.5 0 0 0-3 3.5z" fill="#3ad07a"/><path d="M967.5 69.5a3 3.5 0 0 1 3-3.5v3.5z" fill="#3aa0f0"/>
<path d="M977.5 57h7.5l-3.75 4.2z" fill="#222"/>
<rect x="993.5" y="53.5" width="21.5" height="11.5" fill="none" stroke="#666" stroke-width="1.2"/>
<text x="996" y="63.5" font-size="10.5" fill="#777" font-family="Liberation Sans">abc</text>
<path d="M1022 57h7.5l-3.75 4.2z" fill="#222"/>
<circle cx="1047.8" cy="55.5" r="7.8" fill="url(#sph)" stroke="#555" stroke-width="1.2"/>
<path d="M1040.5 57v13M1044 62v8M1047.8 63v7M1051.5 62v8M1055 57v13" stroke="#2a8ae5" stroke-width="1.2"/>
</svg>
</body></html>
